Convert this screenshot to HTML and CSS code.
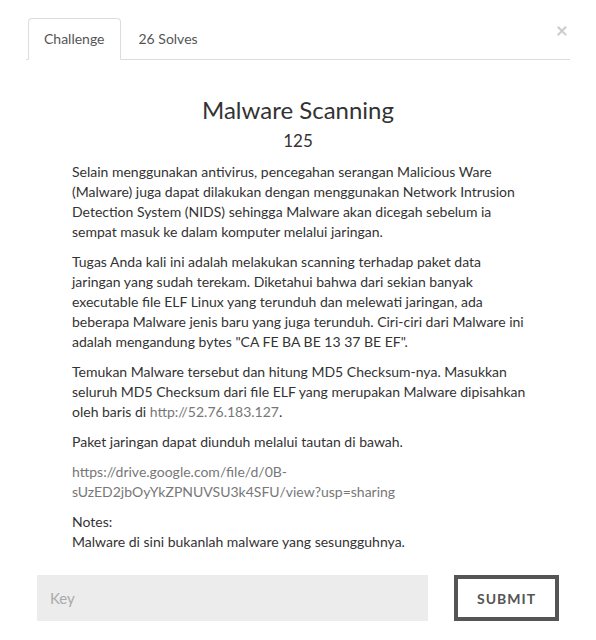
FILE: index.html
```html
<!DOCTYPE html>
<html>
<head>
<meta charset="utf-8">
<link rel="stylesheet" href="styles.css">
</head>
<body>
<div class="modal">
  <button class="close" type="button">&times;</button>
  <ul class="tabs">
    <li class="tab active">Challenge</li>
    <li class="tab">26 Solves</li>
  </ul>
  <h3 class="title">Malware Scanning</h3>
  <h4 class="value">125</h4>
  <div class="desc">
    <p>Selain menggunakan antivirus, pencegahan serangan Malicious Ware (Malware) juga dapat dilakukan dengan menggunakan Network Intrusion Detection System (NIDS) sehingga Malware akan dicegah sebelum ia sempat masuk ke dalam komputer melalui jaringan.</p>
    <p>Tugas Anda kali ini adalah melakukan scanning terhadap paket data jaringan yang sudah terekam. Diketahui bahwa dari sekian banyak executable file ELF Linux yang terunduh dan melewati jaringan, ada beberapa Malware jenis baru yang juga terunduh. Ciri-ciri dari Malware ini adalah mengandung bytes "CA FE BA BE 13 37 BE EF".</p>
    <p>Temukan Malware tersebut dan hitung MD5 Checksum-nya. Masukkan seluruh MD5 Checksum dari file ELF yang merupakan Malware dipisahkan oleh baris di <a class="link">http://52.76.183.127</a>.</p>
    <p>Paket jaringan dapat diunduh melalui tautan di bawah.</p>
    <p><a class="link">https://drive.google.com/file/d/0B-<br>sUzED2jbOyYkZPNUVSU3k4SFU/view?usp=sharing</a></p>
    <p>Notes:<br>Malware di sini bukanlah malware yang sesungguhnya.</p>
  </div>
  <div class="form">
    <input class="key" type="text" placeholder="Key">
    <button class="submit" type="button">SUBMIT</button>
  </div>
</div>
</body>
</html>
```

FILE: styles.css
```css
html, body {
  margin: 0;
  padding: 0;
  background: #fff;
}
body {
  font-family: Lato, "Open Sans", sans-serif;
  font-size: 14px;
  line-height: 20px;
  color: #333;
}
.modal {
  position: relative;
  padding: 18px 26px 0 26px;
}
.close {
  position: absolute;
  top: 18px;
  right: 28px;
  border: 0;
  background: none;
  padding: 0;
  font-family: Lato, sans-serif;
  font-size: 21px;
  font-weight: 700;
  line-height: 24px;
  color: #000;
  opacity: 0.2;
}
.tabs {
  display: flex;
  list-style: none;
  margin: 0;
  padding: 0;
  border-bottom: 1px solid #ddd;
}
.tab {
  padding: 10px 15px;
  margin: 0 0 -1px 2px;
  border: 1px solid transparent;
  border-radius: 4px 4px 0 0;
  color: #555;
}
.tab.active {
  border-color: #ddd #ddd transparent #ddd;
  background: #fff;
}
.title {
  margin: 37px 0 0;
  text-align: center;
  font-size: 24px;
  font-weight: 400;
  line-height: 26px;
}
.value {
  margin: 8px 0 0;
  text-align: center;
  font-size: 17px;
  font-weight: 400;
  line-height: 20px;
}
.desc {
  margin: 11px 0 0 46px;
  width: 456px;
}
.desc p {
  margin: 0 0 10px;
}
.link {
  color: #777;
  text-decoration: none;
}
.form {
  display: flex;
  align-items: stretch;
  margin: 23px 0 0 11px;
  gap: 26px;
}
.key {
  width: 391px;
  height: 46px;
  box-sizing: border-box;
  border: 0;
  background: #ececec;
  padding: 0 13px;
  font-family: Lato, sans-serif;
  font-size: 15px;
  color: #555;
  outline: none;
}
.key::placeholder {
  color: #aaa;
}
.submit {
  width: 105px;
  height: 46px;
  box-sizing: border-box;
  border: 4px solid #555;
  background: #fff;
  font-family: Lato, sans-serif;
  font-size: 14px;
  font-weight: 700;
  letter-spacing: 1px;
  color: #555;
}
```
